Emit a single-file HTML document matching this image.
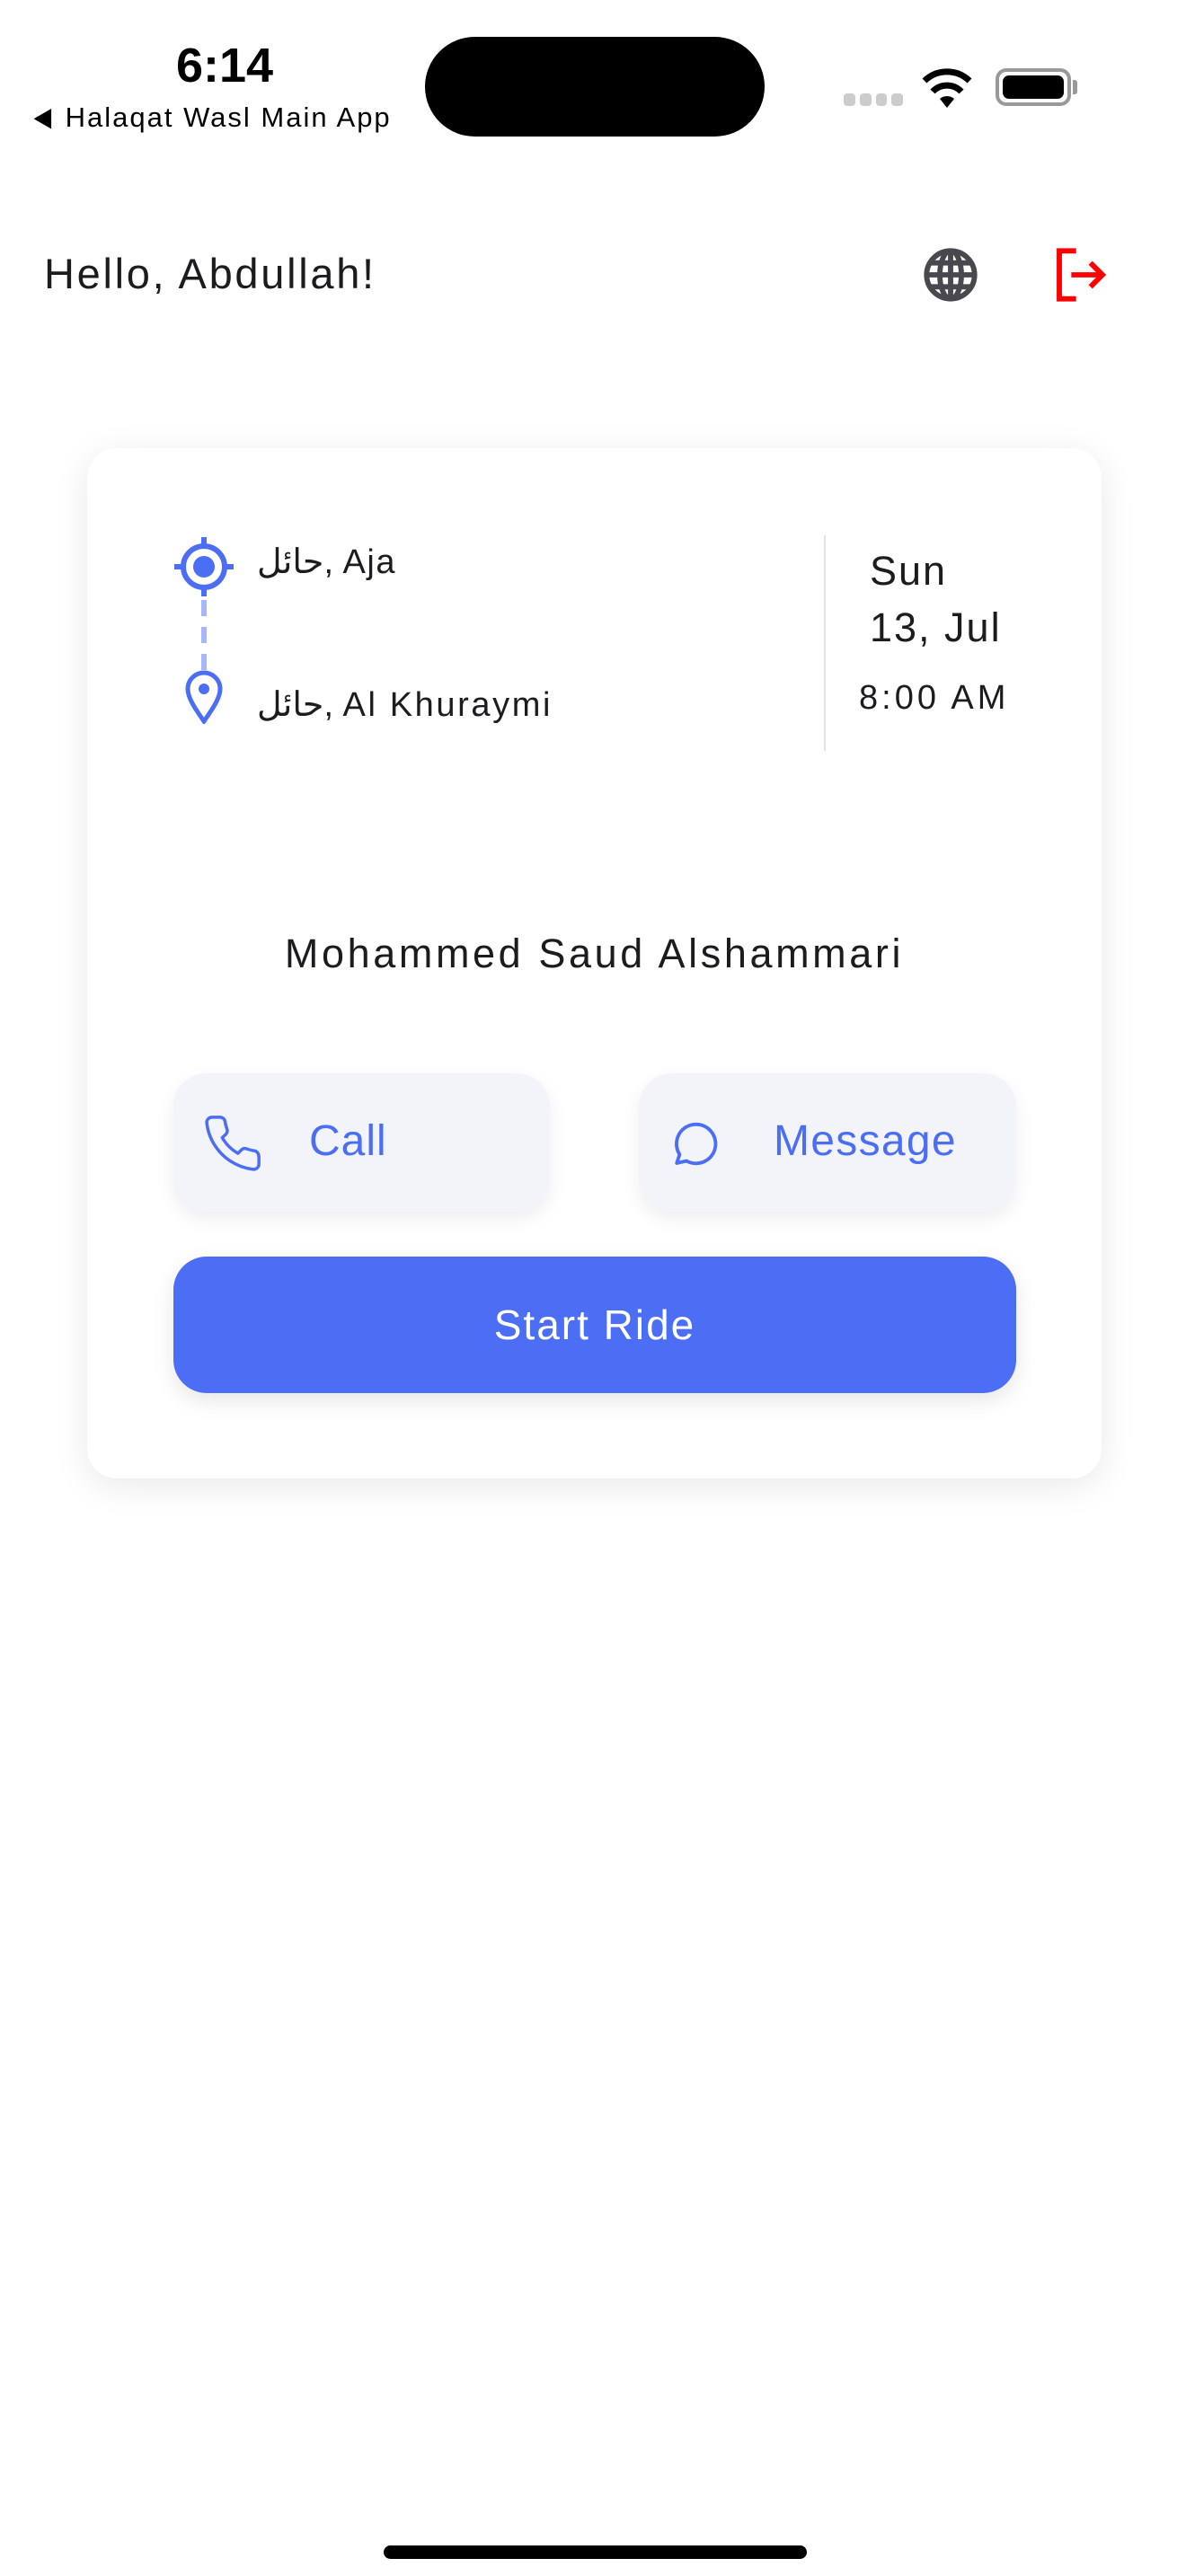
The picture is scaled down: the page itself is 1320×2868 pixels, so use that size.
<!DOCTYPE html>
<html><head><meta charset="utf-8"><style>
*{margin:0;padding:0;box-sizing:border-box}
body{width:1320px;height:2868px;background:#fff;position:relative;overflow:hidden;font-family:"Liberation Sans","Noto Sans CJK SC",sans-serif;color:#1c1c1e}
.a{position:absolute}
.t{white-space:nowrap}
</style></head><body>
<div class="a t" style="left:196px;top:42px;font-size:54px;font-weight:bold;color:#000">6:14</div>
<div class="a t" style="left:36px;top:113px;font-size:31px;color:#000;letter-spacing:2px"><span style="font-size:24px">◀</span> Halaqat Wasl Main App</div>
<div class="a" style="left:473px;top:41px;width:378px;height:111px;background:#000;border-radius:56px"></div>
<div class="a" style="left:939px;top:104px;width:66px;height:14px;display:flex;gap:5px"><i style="flex:1;background:#ccc;border-radius:4px"></i><i style="flex:1;background:#ccc;border-radius:4px"></i><i style="flex:1;background:#ccc;border-radius:4px"></i><i style="flex:1;background:#ccc;border-radius:4px"></i></div>
<svg class="a" style="left:1024px;top:70px" width="60" height="52" viewBox="0 0 60 52"><path d="M30 50 L22 40 A12 12 0 0 1 38 40Z" fill="#000"/><path d="M14 32 A22 22 0 0 1 46 32" stroke="#000" stroke-width="7" fill="none"/><path d="M5 20 A36 36 0 0 1 55 20" stroke="#000" stroke-width="7" fill="none"/></svg>
<div class="a" style="left:1108px;top:76px;width:84px;height:42px;border:4px solid #999;border-radius:12px;padding:4px"><div style="width:100%;height:100%;background:#000;border-radius:7px"></div></div>
<div class="a" style="left:1194px;top:89px;width:5px;height:16px;background:#999;border-radius:0 3px 3px 0"></div>

<div class="a t" style="left:49px;top:277px;font-size:47px;letter-spacing:2.7px">Hello, Abdullah!</div>
<svg class="a" style="left:1026px;top:274px" width="64" height="64" viewBox="0 0 24 24" fill="none" stroke="#48484f" stroke-width="2.2"><circle cx="12" cy="12" r="10"/><ellipse cx="12" cy="12" rx="4.5" ry="10"/><path d="M2 12h20M3.5 7h17M3.5 17h17M12 2v20"/></svg>
<svg class="a" style="left:1170px;top:274px" width="66" height="64" viewBox="0 0 24 24" fill="none" stroke="#f00" stroke-width="2.2"><path d="M10 2H3v20h7"/><path d="M8 12h13M16 7l5 5-5 5"/></svg>

<div class="a" style="left:97px;top:499px;width:1129px;height:1147px;background:#fff;border-radius:33px;box-shadow:0 8px 40px rgba(0,0,0,0.09)"></div>
<svg class="a" style="left:194px;top:598px" width="66" height="66" viewBox="0 0 66 66"><circle cx="33" cy="33" r="23" fill="none" stroke="#4b6ef5" stroke-width="6"/><circle cx="33" cy="33" r="12" fill="#4b6ef5"/><path d="M33 0v10M33 56v10M0 33h10M56 33h10" stroke="#4b6ef5" stroke-width="6"/></svg>
<div class="a" style="left:224px;top:668px;width:6px;height:86px;background:repeating-linear-gradient(#a5b6fa 0 18px,transparent 18px 30px)"></div>
<svg class="a" style="left:205px;top:746px" width="44" height="60" viewBox="0 0 44 60"><path d="M22 57 C10 40 4 30 4 21 A18 18 0 0 1 40 21 C40 30 34 40 22 57Z" fill="none" stroke="#4b6ef5" stroke-width="5"/><circle cx="22" cy="21" r="6" fill="#4b6ef5"/></svg>
<div class="a t" style="left:286px;top:603px;font-size:38px;letter-spacing:1.5px">حائل, Aja</div>
<div class="a t" style="left:286px;top:762px;font-size:38px;letter-spacing:2.6px">حائل, Al Khuraymi</div>
<div class="a" style="left:917px;top:596px;width:2px;height:240px;background:#e3e3e6"></div>
<div class="a t" style="left:968px;top:604px;font-size:45px;line-height:1.4;letter-spacing:2px">Sun<br>13, Jul</div>
<div class="a t" style="left:956px;top:756px;font-size:38px;letter-spacing:4px">8:00 AM</div>

<div class="a t" style="left:0;width:1323px;top:1036px;text-align:center;font-size:45px;letter-spacing:3.6px">Mohammed Saud Alshammari</div>

<div class="a" style="left:193px;top:1195px;width:419px;height:154px;background:#f2f4fa;border-radius:37px;box-shadow:0 8px 20px rgba(0,0,0,0.07)"></div>
<div class="a" style="left:711px;top:1195px;width:420px;height:154px;background:#f2f4fa;border-radius:37px;box-shadow:0 8px 20px rgba(0,0,0,0.07)"></div>
<svg class="a" style="left:224px;top:1238px" width="70" height="70" viewBox="0 0 24 24" fill="none" stroke="#4b6ef5" stroke-width="1.2" stroke-linejoin="round"><path d="M22 16.9v3a2 2 0 0 1-2.2 2 19.8 19.8 0 0 1-8.6-3.1 19.5 19.5 0 0 1-6-6A19.8 19.8 0 0 1 2.1 4.2 2 2 0 0 1 4.1 2h3a2 2 0 0 1 2 1.7c.1.9.4 1.9.7 2.8a2 2 0 0 1-.5 2.1L8 9.8a16 16 0 0 0 6 6l1.3-1.3a2 2 0 0 1 2.1-.4c.9.3 1.8.6 2.8.7a2 2 0 0 1 1.7 2z"/></svg>
<div class="a t" style="left:344px;top:1243px;font-size:48px;color:#4b6ef5;letter-spacing:1px">Call</div>
<svg class="a" style="left:746px;top:1243px" width="58" height="58" viewBox="0 0 24 24" fill="none" stroke="#4b6ef5" stroke-width="1.6" stroke-linejoin="round"><path d="M3 21.5l1.3-4A9 9 0 1 1 7.5 20.5z"/></svg>
<div class="a t" style="left:861px;top:1243px;font-size:48px;color:#4b6ef5;letter-spacing:1.3px">Message</div>

<div class="a" style="left:193px;top:1399px;width:938px;height:152px;background:#4b6ef5;border-radius:37px;box-shadow:0 8px 24px rgba(0,0,0,0.10)"></div>
<div class="a t" style="left:193px;width:938px;top:1448px;text-align:center;font-size:46px;color:#fff;letter-spacing:2px">Start Ride</div>

<div class="a" style="left:427px;top:2834px;width:471px;height:15px;background:#000;border-radius:8px"></div>
</body></html>
